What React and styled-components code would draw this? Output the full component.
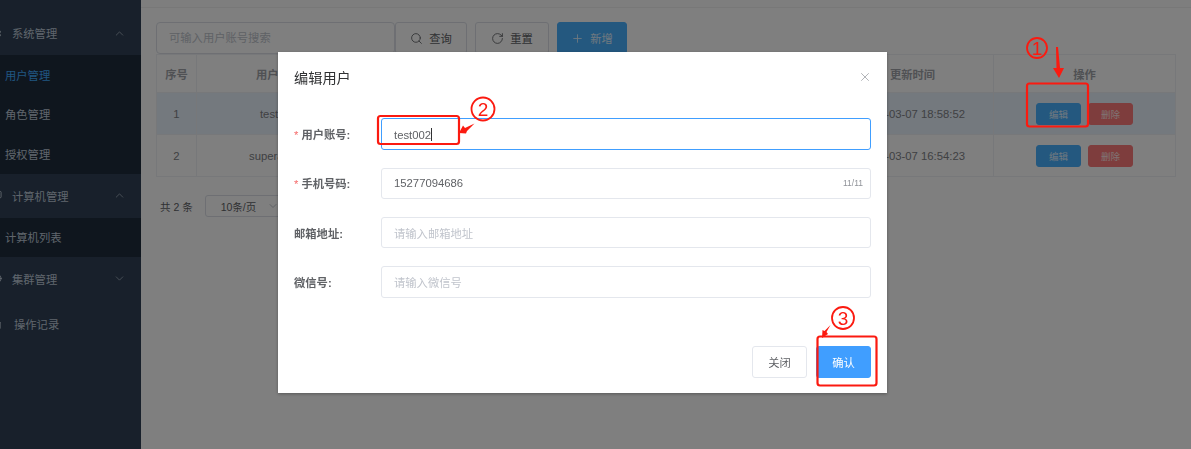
import React from 'react';
import styled, { createGlobalStyle } from 'styled-components';
import { Search, RotateCw, Plus, X, ChevronUp, ChevronDown, Settings, Monitor, Globe, FileText } from 'lucide-react';

const GlobalStyle = createGlobalStyle`
  html, body {
    margin: 0;
    height: 100%;
    overflow: hidden;
    background: #fff;
  }
  body, input, button {
    font-family: "Liberation Sans", "Noto Sans CJK SC", sans-serif;
    font-size: 11.3px;
  }
`;

const Page = styled.div`
  display: flex;
  width: 1191px;
  height: 449px;
  overflow: hidden;
`;

const Sidebar = styled.aside`
  flex: none;
  width: 141px;
  padding-top: 11px;
  background: #304156;
  color: #bfcbd9;
`;

const MenuTitle = styled.div`
  display: flex;
  align-items: center;
  height: ${(p) => p.$height || 44}px;
  padding-right: 15px;
  svg.lead {
    flex: none;
    width: 11px;
    height: 11px;
    margin: 0 ${(p) => p.$gap || 10}px 0 -9px;
  }
  svg.caret {
    margin-left: auto;
    width: 13px;
    height: 13px;
    stroke-width: 1.2;
  }
`;

const SubMenu = styled.div`
  background: #1f2d3d;
`;

const SubItem = styled.div`
  display: flex;
  align-items: center;
  height: 39.5px;
  padding-left: 5px;
  color: ${(p) => (p.$active ? '#40aaff' : '#bfcbd9')};
`;

const Main = styled.main`
  flex: 1;
  min-width: 0;
  display: flex;
  flex-direction: column;
`;

const TopStrip = styled.div`
  flex: none;
  height: 7px;
  border-bottom: 1px solid #f0f0f0;
  background: #fdfdfd;
`;

const Content = styled.div`
  padding: 14px 16px 0 15px;
`;

const Toolbar = styled.div`
  display: flex;
  align-items: stretch;
  height: 32px;
`;

const SearchBox = styled.input`
  box-sizing: border-box;
  width: 239px;
  padding: 0 12px;
  border: 1px solid #dcdfe6;
  border-radius: 4px;
  outline: none;
  &::placeholder {
    color: #c0c4cc;
  }
`;

const ToolButton = styled.button`
  box-sizing: border-box;
  display: flex;
  align-items: center;
  justify-content: center;
  gap: 6px;
  width: ${(p) => p.$width}px;
  margin-left: ${(p) => p.$left}px;
  padding: 0;
  border: 1px solid ${(p) => (p.$primary ? '#48b0ff' : '#dcdfe6')};
  border-radius: 3px;
  background: ${(p) => (p.$primary ? '#48b0ff' : '#fff')};
  color: ${(p) => (p.$primary ? '#e0f2ff' : '#606266')};
  svg {
    width: 13px;
    height: 13px;
    stroke-width: 1.6;
  }
`;

const Table = styled.table`
  width: 1019px;
  table-layout: fixed;
  border-collapse: collapse;
  border: 1px solid #eef0f5;
  th, td {
    padding: 0;
    text-align: center;
    border-right: 1px solid #eef0f5;
    border-bottom: 1px solid #eef0f5;
    color: #808286;
    font-weight: 400;
  }
  th {
    height: 37px;
    color: #a0a3a8;
    font-weight: 700;
  }
  td {
    height: 41px;
  }
  tr.current td {
    background: #e9f2fd;
  }
`;

const RowActions = styled.div`
  display: flex;
  justify-content: center;
  gap: 7px;
`;

const SmallButton = styled.button`
  width: 45px;
  height: 22px;
  padding: 0;
  border: 1px solid ${(p) => (p.$danger ? '#fc7a7a' : '#48b0ff')};
  border-radius: 3px;
  background: ${(p) => (p.$danger ? '#fc7a7a' : '#48b0ff')};
  color: ${(p) => (p.$danger ? '#ffe6e6' : '#e0f2ff')};
  font-size: 9.5px;
`;

const Pager = styled.div`
  display: flex;
  align-items: center;
  gap: 12px;
  margin: 18px 0 0 4px;
  color: #606266;
  font-size: 10.5px;
`;

const PageSize = styled.div`
  box-sizing: border-box;
  display: flex;
  align-items: center;
  justify-content: space-between;
  width: 80px;
  height: 22px;
  padding: 0 5px 0 15px;
  border: 1px solid #dcdfe6;
  border-radius: 3px;
  svg {
    width: 12px;
    height: 12px;
    color: #c0c4cc;
  }
`;

const Mask = styled.div`
  position: fixed;
  inset: 0;
  background: rgba(0, 0, 0, 0.5);
`;

const Dialog = styled.section`
  box-sizing: border-box;
  position: absolute;
  left: 278px;
  top: 52px;
  width: 609px;
  height: 341px;
  padding: 0 16px;
  background: #fff;
  box-shadow: 0 1px 3px rgba(0, 0, 0, 0.3);
`;

const DialogHead = styled.header`
  display: flex;
  align-items: center;
  justify-content: space-between;
  height: 50px;
  color: #303133;
  font-size: 14.2px;
  svg {
    width: 14px;
    height: 14px;
    stroke-width: 1.2;
    color: #909399;
    margin-right: -1px;
  }
`;

const Form = styled.form`
  display: flex;
  flex-direction: column;
  gap: 17.8px;
  margin-top: 16.3px;
`;

const Field = styled.div`
  display: flex;
  align-items: center;
`;

const Label = styled.label`
  flex: none;
  width: 87px;
  color: #606266;
  font-weight: 700;
  b {
    margin-right: 3px;
    color: #f56c6c;
    font-weight: 400;
  }
`;

const InputWrap = styled.div`
  box-sizing: border-box;
  flex: 1;
  display: flex;
  align-items: center;
  justify-content: space-between;
  height: 31.5px;
  padding: 0 3px 0 12px;
  border: 1px solid ${(p) => (p.$focused ? '#409eff' : '#e4e7ed')};
  border-radius: 3px;
  color: ${(p) => (p.$placeholder ? '#c0c4cc' : '#606266')};
`;

const Caret = styled.span`
  display: inline-block;
  width: 1px;
  height: 13px;
  background: #303133;
  vertical-align: -2px;
`;

const Count = styled.span`
  padding-right: 4px;
  color: #909399;
  font-size: 8.5px;
`;

const DialogFoot = styled.footer`
  display: flex;
  justify-content: flex-end;
  gap: 9px;
  margin-top: 48.3px;
`;

const FootButton = styled.button`
  width: 55px;
  height: 32px;
  padding: 0;
  border: 1px solid ${(p) => (p.$primary ? '#409eff' : '#e4e7ed')};
  border-radius: 3px;
  background: ${(p) => (p.$primary ? '#409eff' : '#fff')};
  color: ${(p) => (p.$primary ? '#fff' : '#606266')};
`;

const Notes = styled.svg`
  position: fixed;
  left: 0;
  top: 0;
  width: 1191px;
  height: 449px;
  fill: none;
  stroke: #fb1a10;
  pointer-events: none;
  text {
    fill: #fb1a10;
    stroke: none;
    font-family: "Liberation Sans", sans-serif;
    font-size: 19px;
    text-anchor: middle;
  }
  path {
    fill: #fb1a10;
    stroke: none;
  }
`;

const rows = [
  { id: 1, name: 'test002', time: '2021-03-07 18:58:52', current: true },
  { id: 2, name: 'superadmin', time: '2021-03-07 16:54:23' },
];

function Annotations() {
  return (
    <Notes viewBox="0 0 1191 449">
      <rect x="1027" y="83.5" width="61" height="43" rx="2.5" strokeWidth="2.2" />
      <circle cx="1037" cy="48" r="10" strokeWidth="1.8" />
      <text x="1037" y="54.5">1</text>
      <path d="M1056 47 L1058 47 L1060 68 L1064 68 L1059 78 L1053 68 L1056.5 68 Z" />

      <rect x="378" y="116" width="81" height="28" rx="2.5" strokeWidth="2.2" />
      <circle cx="483" cy="109" r="11.5" strokeWidth="1.8" />
      <text x="483" y="115.5">2</text>
      <path d="M474.5 123.5 L467 131 L466 133.5 L459 133 L463 125.5 L465 128 Z" />

      <rect x="817.5" y="336.5" width="59" height="49" rx="2.5" strokeWidth="2.2" />
      <circle cx="843" cy="318" r="11" strokeWidth="1.8" />
      <text x="843" y="324.5">3</text>
      <path d="M830.5 325 L826.5 332 L828 334 L822 338 L822.5 330 L824.5 331 Z" />
    </Notes>
  );
}

export default function App() {
  return (
    <>
      <GlobalStyle />
      <Page>
        <Sidebar>
          <MenuTitle>
            <Settings className="lead" />
            系统管理
            <ChevronUp className="caret" />
          </MenuTitle>
          <SubMenu>
            <SubItem $active>用户管理</SubItem>
            <SubItem>角色管理</SubItem>
            <SubItem>授权管理</SubItem>
          </SubMenu>
          <MenuTitle>
            <Monitor className="lead" />
            计算机管理
            <ChevronUp className="caret" />
          </MenuTitle>
          <SubMenu>
            <SubItem>计算机列表</SubItem>
          </SubMenu>
          <MenuTitle $height={43}>
            <Globe className="lead" />
            集群管理
            <ChevronDown className="caret" />
          </MenuTitle>
          <MenuTitle $height={48} $gap={12}>
            <FileText className="lead" />
            操作记录
          </MenuTitle>
        </Sidebar>

        <Main>
          <TopStrip />
          <Content>
            <Toolbar>
              <SearchBox placeholder="可输入用户账号搜索" readOnly />
              <ToolButton $width={72} $left={0}><Search />查询</ToolButton>
              <ToolButton $width={74} $left={8}><RotateCw />重置</ToolButton>
              <ToolButton $width={70} $left={8} $primary><Plus />新增</ToolButton>
            </Toolbar>
            <Table>
              <colgroup>
                <col width="40" />
                <col width="164" />
                <col width="160" />
                <col width="160" />
                <col width="151" />
                <col width="162" />
                <col width="182" />
              </colgroup>
              <thead>
                <tr>
                  <th>序号</th>
                  <th>用户账号</th>
                  <th>手机号码</th>
                  <th>邮箱地址</th>
                  <th>微信号</th>
                  <th>更新时间</th>
                  <th>操作</th>
                </tr>
              </thead>
              <tbody>
                {rows.map((row) => (
                  <tr key={row.id} className={row.current ? 'current' : undefined}>
                    <td>{row.id}</td>
                    <td>{row.name}</td>
                    <td />
                    <td />
                    <td />
                    <td>{row.time}</td>
                    <td>
                      <RowActions>
                        <SmallButton>编辑</SmallButton>
                        <SmallButton $danger>删除</SmallButton>
                      </RowActions>
                    </td>
                  </tr>
                ))}
              </tbody>
            </Table>
            <Pager>
              <span>共 2 条</span>
              <PageSize>10条/页<ChevronDown /></PageSize>
            </Pager>
          </Content>
        </Main>
      </Page>

      <Mask />

      <Dialog>
        <DialogHead>
          编辑用户
          <X />
        </DialogHead>
        <Form>
          <Field>
            <Label><b>*</b>用户账号:</Label>
            <InputWrap $focused><span>test002<Caret /></span></InputWrap>
          </Field>
          <Field>
            <Label><b>*</b>手机号码:</Label>
            <InputWrap><span>15277094686</span><Count>11/11</Count></InputWrap>
          </Field>
          <Field>
            <Label>邮箱地址:</Label>
            <InputWrap $placeholder>请输入邮箱地址</InputWrap>
          </Field>
          <Field>
            <Label>微信号:</Label>
            <InputWrap $placeholder>请输入微信号</InputWrap>
          </Field>
        </Form>
        <DialogFoot>
          <FootButton type="button">关闭</FootButton>
          <FootButton type="button" $primary>确认</FootButton>
        </DialogFoot>
      </Dialog>

      <Annotations />
    </>
  );
}
